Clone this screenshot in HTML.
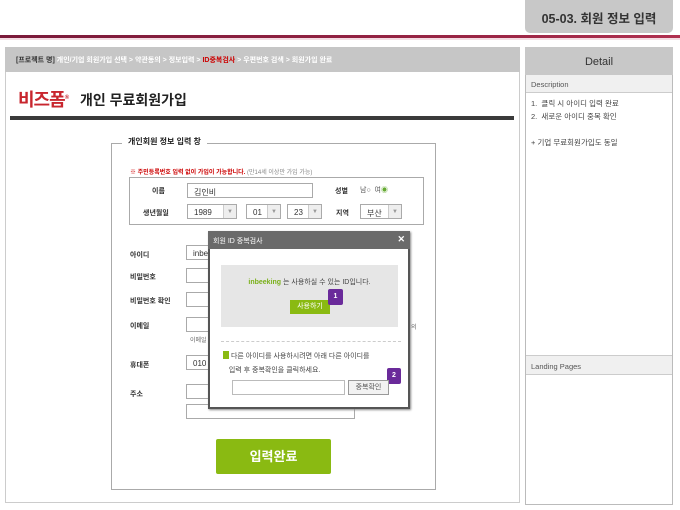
<!DOCTYPE html>
<html><head><meta charset="utf-8"><style>
*{box-sizing:border-box;margin:0;padding:0}
body{width:680px;height:510px;background:#fff;position:relative;overflow:hidden;font-family:"Liberation Sans","Noto Sans CJK KR",sans-serif;color:#333}
.a{position:absolute}
.inp{position:absolute;border:1px solid #aaa;background:#fff;font-size:8px;padding:3px 6px}
.lb{position:absolute;font-size:7px;font-weight:bold;color:#333}
.sel{position:absolute;border:1px solid #aaa;background:#fff;font-size:8px;padding:3px 6px}
.sel i{position:absolute;right:0;top:0;bottom:0;width:13px;border-left:1px solid #ccc;background:#eee;font-style:normal;font-size:6px;color:#999;text-align:center;line-height:15px}
</style></head><body>
<div class="a" style="left:525px;top:0;width:148px;height:33px;background:#c8c8c8;border-radius:0 0 5px 5px;font-size:12.5px;font-weight:bold;color:#333;text-align:center;line-height:38px">05-03. 회원 정보 입력</div>
<div class="a" style="left:0;top:35px;width:680px;height:3px;background:linear-gradient(90deg,#7a1a3a,#9a2545 70%,#b03050)"></div>
<div class="a" style="left:0;top:38px;width:680px;height:2px;background:#f3dde3"></div>

<div class="a" style="left:5px;top:47px;width:515px;height:456px;border:1px solid #ccc"></div>
<div class="a" style="left:5px;top:47px;width:515px;height:25px;background:#c6c6c6;font-size:7px;font-weight:bold;color:#fff;padding:8px 0 0 11px"><span style="color:#333">[프로젝트 명]</span> 개인/기업 회원가입 선택 &gt; 약관동의 &gt; 정보입력 &gt; <span style="color:#c00">ID중복검사</span> &gt; 우편번호 검색 &gt; 회원가입 완료</div>
<div class="a" style="left:18px;top:86px;font-size:18px;font-weight:bold;color:#c8262e;letter-spacing:-1px">비즈폼<sup style="font-size:6px">®</sup></div>
<div class="a" style="left:80px;top:90px;font-size:14px;font-weight:bold;color:#222">개인 무료회원가입</div>
<div class="a" style="left:10px;top:116px;width:504px;height:4px;background:#3a3a3a"></div>

<div class="a" style="left:111px;top:143px;width:325px;height:347px;border:1px solid #aaa"></div>
<div class="a" style="left:122px;top:136px;background:#fff;padding:0 6px;font-size:8px;font-weight:bold;color:#222">개인회원 정보 입력 창</div>
<div class="a" style="left:130px;top:167px;font-size:6px;color:#c00;font-weight:bold">※ 주민등록번호 입력 없이 가입이 가능합니다. <span style="color:#888;font-weight:normal">(만14세 이상만 가입 가능)</span></div>
<div class="a" style="left:129px;top:177px;width:295px;height:48px;border:1px solid #aaa"></div>
<div class="lb" style="left:152px;top:186px">이름</div>
<div class="inp" style="left:187px;top:183px;width:126px;height:15px">김인비</div>
<div class="lb" style="left:335px;top:186px">성별</div>
<div class="a" style="left:360px;top:185px;font-size:7px;color:#555">남○ &nbsp;여<span style="color:#6a3">◉</span></div>
<div class="lb" style="left:143px;top:208px">생년월일</div>
<div class="sel" style="left:187px;top:204px;width:50px;height:15px">1989<i>▼</i></div>
<div class="sel" style="left:246px;top:204px;width:35px;height:15px">01<i>▼</i></div>
<div class="sel" style="left:287px;top:204px;width:35px;height:15px">23<i>▼</i></div>
<div class="lb" style="left:336px;top:208px">지역</div>
<div class="sel" style="left:360px;top:204px;width:42px;height:15px">부산<i>▼</i></div>

<div class="lb" style="left:130px;top:250px">아이디</div>
<div class="inp" style="left:186px;top:245px;width:40px;height:15px">inbe</div>
<div class="lb" style="left:130px;top:272px">비밀번호</div>
<div class="inp" style="left:186px;top:268px;width:40px;height:15px"></div>
<div class="lb" style="left:130px;top:296px">비밀번호 확인</div>
<div class="inp" style="left:186px;top:292px;width:40px;height:15px"></div>
<div class="lb" style="left:130px;top:321px">이메일</div>
<div class="inp" style="left:186px;top:317px;width:40px;height:15px"></div>
<div class="a" style="left:190px;top:335px;font-size:6px;color:#666">이메일</div>
<div class="a" style="left:411px;top:322px;font-size:6px;color:#666">의</div>
<div class="lb" style="left:130px;top:360px">휴대폰</div>
<div class="inp" style="left:186px;top:355px;width:40px;height:15px">010</div>
<div class="lb" style="left:130px;top:389px">주소</div>
<div class="inp" style="left:186px;top:384px;width:40px;height:15px"></div>
<div class="inp" style="left:186px;top:404px;width:169px;height:15px"></div>
<div class="a" style="left:216px;top:439px;width:115px;height:35px;background:#8aba12;border-radius:2px;color:#fff;font-size:13px;font-weight:bold;text-align:center;line-height:35px">입력완료</div>

<div class="a" style="left:208px;top:231px;width:202px;height:178px;border:2px solid #555;background:#fff;box-shadow:1px 1px 2px #888"></div>
<div class="a" style="left:208px;top:231px;width:202px;height:18px;background:#6a6a6a;color:#fff;font-size:7px;padding:5px 0 0 5px">회원 ID 중복검사<span style="position:absolute;right:5px;top:3px;font-weight:bold;font-size:9px">✕</span></div>
<div class="a" style="left:221px;top:265px;width:177px;height:62px;background:#e6e6e6"></div>
<div class="a" style="left:221px;top:277px;width:177px;text-align:center;font-size:7px;color:#444"><b style="color:#7ab01a">inbeeking</b> 는 사용하실 수 있는 ID입니다.</div>
<div class="a" style="left:290px;top:300px;width:40px;height:14px;background:#8aba12;color:#fff;font-size:7px;text-align:center;line-height:14px">사용하기</div>
<div class="a" style="left:328px;top:289px;width:15px;height:16px;background:#6a2a9a;border-radius:2px;color:#fff;font-size:7px;font-weight:bold;text-align:center;line-height:16px">1</div>
<div class="a" style="left:221px;top:341px;width:180px;border-top:1px dashed #ccc"></div>
<div class="a" style="left:223px;top:350px;font-size:7px;color:#444;line-height:14px"><span style="display:inline-block;width:6px;height:8px;background:#8aba12;vertical-align:-1px"></span> 다른 아이디를 사용하시려면 아래 다른 아이디를<br>&nbsp;&nbsp;&nbsp;입력 후 중복확인을 클릭하세요.</div>
<div class="a" style="left:387px;top:368px;width:14px;height:16px;background:#6a2a9a;border-radius:2px;color:#fff;font-size:7px;font-weight:bold;text-align:center;line-height:16px">2</div>
<div class="a" style="left:232px;top:380px;width:113px;height:15px;border:1px solid #bbb"></div>
<div class="a" style="left:348px;top:380px;width:41px;height:15px;border:1px solid #999;background:#f2f2f2;font-size:7px;color:#555;text-align:center;line-height:13px">중복확인</div>

<div class="a" style="left:525px;top:47px;width:148px;height:458px;border:1px solid #bbb"></div>
<div class="a" style="left:525px;top:47px;width:148px;height:28px;background:#c8c8c8;font-size:11px;color:#333;text-align:center;line-height:30px">Detail</div>
<div class="a" style="left:526px;top:75px;width:146px;height:18px;background:#f0f0f0;border-bottom:1px solid #ccc;font-size:7.5px;color:#555;padding:5px 0 0 5px">Description</div>
<div class="a" style="left:531px;top:97px;font-size:7.5px;color:#444;line-height:13px">1.&nbsp; 클릭 시 아이디 입력 완료<br>2.&nbsp; 새로운 아이디 중복 확인<br><br>+ 기업 무료회원가입도 동일</div>
<div class="a" style="left:526px;top:355px;width:146px;height:20px;background:#f0f0f0;border-top:1px solid #ccc;border-bottom:1px solid #ccc;font-size:7.5px;color:#555;padding:6px 0 0 5px">Landing Pages</div>
</body></html>
